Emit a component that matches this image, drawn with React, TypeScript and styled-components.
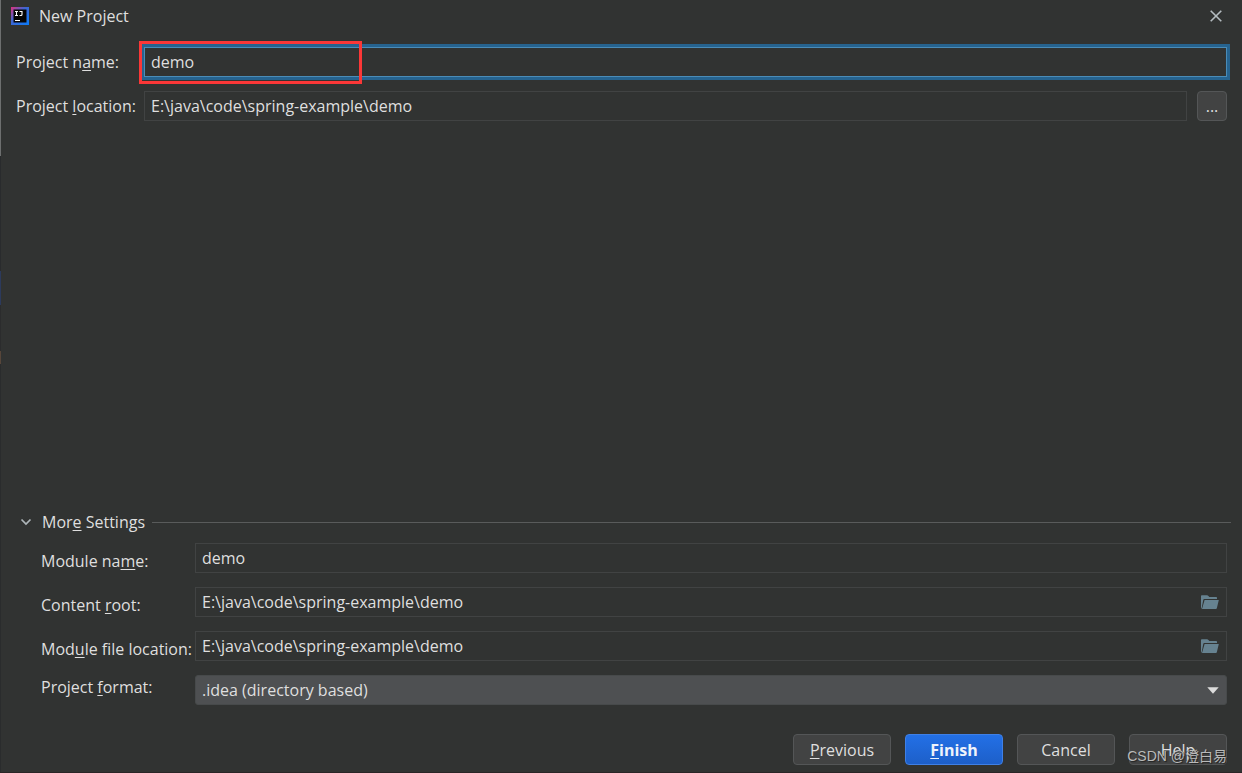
import React from "react";
import styled, { createGlobalStyle, css } from "styled-components";

const GlobalStyle = createGlobalStyle`
  * { box-sizing: border-box; }
  body {
    margin: 0;
    background: #313332;
    color: #dfdfdf;
    font: 16px/22px "Open Sans", "Noto Sans CJK SC", sans-serif;
  }
  button, input, select { font: inherit; color: inherit; }
`;

const Dialog = styled.main`
  position: relative;
  display: flex;
  flex-direction: column;
  min-height: 100vh;
  padding: 0 15px 8px 16px;
  background:
    linear-gradient(#2a2526, #2a2526) bottom / 100% 1px no-repeat,
    linear-gradient(
      #6d6f6f 0 156px, #292b2d 156px 271px, #2c3a5c 271px 305px,
      #2b2c2d 305px 351px, #57463a 351px 364px, #2a2c2d 364px
    ) left / 1px 100% no-repeat,
    #313332;
`;

const TitleBar = styled.header`
  display: flex;
  align-items: center;
  height: 32px;
  margin-left: -5px;
`;

const Title = styled.h1`
  flex: 1;
  margin: 0 0 0 10px;
  font-size: 16px;
  font-weight: 400;
`;

const CloseButton = styled.button`
  display: flex;
  align-items: center;
  justify-content: center;
  width: 22px;
  height: 22px;
  padding: 0;
  border: 0;
  background: none;
`;

const Fields = styled.div`
  display: grid;
  grid-template-columns: 128px minmax(0, 1fr);
  row-gap: 14px;
  padding-top: 15px;
`;

const Label = styled.label<{ $nudge?: "down" | "up" }>`
  align-self: center;
  white-space: nowrap;
  ${(p) => p.$nudge === "down" && css`padding-top: 6px;`}
  ${(p) => p.$nudge === "up" && css`padding-bottom: 6px;`}
`;

const Mnemonic = styled.u`
  text-decoration-thickness: 1px;
  text-underline-offset: 2px;
  text-decoration-skip-ink: none;
`;

const TextBox = styled.input<{ $active?: boolean }>`
  display: block;
  width: 100%;
  min-width: 0;
  height: 30px;
  padding: 0 6px;
  border: 1px solid ${(p) => (p.$active ? "#4a8cb8" : "#414343")};
  border-radius: 0;
  outline: 0;
  background: #313332;
  ${(p) => p.$active && css`box-shadow: 0 0 0 3px #26638f;`}
`;

const NameCell = styled.div`
  position: relative;
`;

const Highlight = styled.div`
  position: absolute;
  top: -6px;
  left: -5px;
  width: 223px;
  height: 43px;
  border: 3px solid #fb3737;
  pointer-events: none;
`;

const LocationCell = styled.div`
  display: flex;
  gap: 10px;
`;

const buttonFace = css`
  border: 1px solid #545657;
  border-radius: 4px;
  background: #424343;
`;

const BrowseButton = styled.button`
  ${buttonFace}
  flex: none;
  width: 30px;
  height: 30px;
  padding: 0;
`;

const MoreSettings = styled.section`
  margin-top: auto;
`;

const MoreHeader = styled.div`
  display: flex;
  align-items: center;
  margin-right: -4px;
`;

const Disclosure = styled.button`
  display: flex;
  align-items: center;
  gap: 10px;
  padding: 0 0 0 4px;
  border: 0;
  background: none;
`;

const Rule = styled.hr`
  flex: 1;
  height: 1px;
  margin: 0 0 0 7px;
  border: 0;
  background: #595b5b;
`;

const MoreFields = styled.div`
  display: grid;
  grid-template-columns: 154px minmax(0, 1fr);
  row-gap: 14px;
  padding: 10px 0 0 25px;
`;

const Picker = styled.div`
  position: relative;
`;

const FolderButton = styled.button`
  position: absolute;
  top: 0;
  right: 6px;
  display: flex;
  align-items: center;
  width: 22px;
  height: 30px;
  padding: 0 2px;
  border: 0;
  background: none;
`;

const Select = styled.select`
  display: block;
  appearance: none;
  width: 100%;
  height: 30px;
  padding: 0 6px;
  border: 1px solid #474a4b;
  border-radius: 3px;
  background: #4e5052;
`;

const Arrow = styled.svg`
  position: absolute;
  top: 12px;
  right: 8px;
  pointer-events: none;
`;

const Actions = styled.footer`
  display: flex;
  justify-content: flex-end;
  gap: 14px;
  padding-top: 29px;
`;

const ActionButton = styled.button<{ $primary?: boolean }>`
  ${buttonFace}
  width: 98px;
  height: 31px;
  padding: 0;
  ${(p) =>
    p.$primary &&
    css`
      border-color: #3f80e6;
      background: linear-gradient(#2370e6, #1d5fc9);
      color: #eef3fb;
      font-weight: 700;
    `}
`;

const Watermark = styled.div`
  position: absolute;
  right: 15px;
  bottom: 6px;
  color: #b9baba;
  font: 14px/22px "Liberation Sans", "Noto Sans CJK SC", sans-serif;
  text-shadow: 1px 1px 1px #222;
  white-space: nowrap;
  pointer-events: none;
`;

function AppLogo() {
  return (
    <svg width="18" height="18" viewBox="0 0 18 18" aria-hidden="true">
      <defs>
        <linearGradient id="logo" x1="0" y1="0" x2="1" y2="1">
          <stop offset="0" stopColor="#e0317c" />
          <stop offset="0.4" stopColor="#4265d0" />
          <stop offset="1" stopColor="#087cfa" />
        </linearGradient>
      </defs>
      <path fill="url(#logo)" d="M0 0h18v18H0z" />
      <path fill="#050505" d="M2.5 2.5h13v13h-13z" />
      <path
        d="M4 4.500h3M5.500 4.500v4M4 8.500h3M8.500 4.500h2.500v3q0 1-1 1H8.500M4 13.500h5"
        fill="none"
        stroke="#fff"
        strokeWidth="1.100"
      />
    </svg>
  );
}

function FolderIcon() {
  return (
    <svg width="18" height="14" viewBox="0 0 18 14" fill="#668290" aria-hidden="true">
      <path d="M0 13.500V1q0-.8.8-.8h5.400q.5 0 .9.500L8.400 2h6.800q.8 0 .8.800V4H3.300q-.8 0-1 .8L.6 13.500z" />
      <path d="M3.600 5h14.200l-1.900 8q-.2.900-1 .9H1z" />
    </svg>
  );
}

function PathField({ id }: { id: string }) {
  return (
    <Picker>
      <TextBox id={id} defaultValue={"E:\\java\\code\\spring-example\\demo"} />
      <FolderButton type="button" aria-label="Browse">
        <FolderIcon />
      </FolderButton>
    </Picker>
  );
}

export default function App() {
  return (
    <>
      <GlobalStyle />
      <Dialog>
        <TitleBar>
          <AppLogo />
          <Title>New Project</Title>
          <CloseButton type="button" aria-label="Close">
            <svg width="12" height="12" viewBox="0 0 12 12" stroke="#b4bcc0" strokeWidth="1.600">
              <path d="M.7.7l10.600 10.600M11.300.7L.7 11.300" />
            </svg>
          </CloseButton>
        </TitleBar>

        <Fields>
          <Label htmlFor="name">
            Project n<Mnemonic>a</Mnemonic>me:
          </Label>
          <NameCell>
            <TextBox id="name" $active defaultValue="demo" />
            <Highlight />
          </NameCell>
          <Label htmlFor="location">
            Project <Mnemonic>l</Mnemonic>ocation:
          </Label>
          <LocationCell>
            <TextBox id="location" defaultValue={"E:\\java\\code\\spring-example\\demo"} />
            <BrowseButton type="button">...</BrowseButton>
          </LocationCell>
        </Fields>

        <MoreSettings>
          <MoreHeader>
            <Disclosure type="button" aria-expanded="true">
              <svg width="12" height="8" viewBox="0 0 12 8" fill="none" stroke="#aeb6ba" strokeWidth="1.700">
                <path d="M1.500 1.500L6 6l4.500-4.500" />
              </svg>
              <span>
                Mor<Mnemonic>e</Mnemonic> Settings
              </span>
            </Disclosure>
            <Rule />
          </MoreHeader>
          <MoreFields>
            <Label htmlFor="module" $nudge="down">
              Module na<Mnemonic>m</Mnemonic>e:
            </Label>
            <TextBox id="module" defaultValue="demo" />
            <Label htmlFor="root" $nudge="down">
              Content <Mnemonic>r</Mnemonic>oot:
            </Label>
            <PathField id="root" />
            <Label htmlFor="file" $nudge="down">
              Mod<Mnemonic>u</Mnemonic>le file location:
            </Label>
            <PathField id="file" />
            <Label htmlFor="format" $nudge="up">
              Project <Mnemonic>f</Mnemonic>ormat:
            </Label>
            <Picker>
              <Select id="format">
                <option>.idea (directory based)</option>
              </Select>
              <Arrow width="12" height="7" viewBox="0 0 12 7" fill="#dcdcdc">
                <path d="M.3.300h11.400L6 6.700z" />
              </Arrow>
            </Picker>
          </MoreFields>
        </MoreSettings>

        <Actions>
          <ActionButton type="button">
            <Mnemonic>P</Mnemonic>revious
          </ActionButton>
          <ActionButton type="button" $primary>
            <Mnemonic>F</Mnemonic>inish
          </ActionButton>
          <ActionButton type="button">Cancel</ActionButton>
          <ActionButton type="button">Help</ActionButton>
        </Actions>
        <Watermark>CSDN @澄白易</Watermark>
      </Dialog>
    </>
  );
}
